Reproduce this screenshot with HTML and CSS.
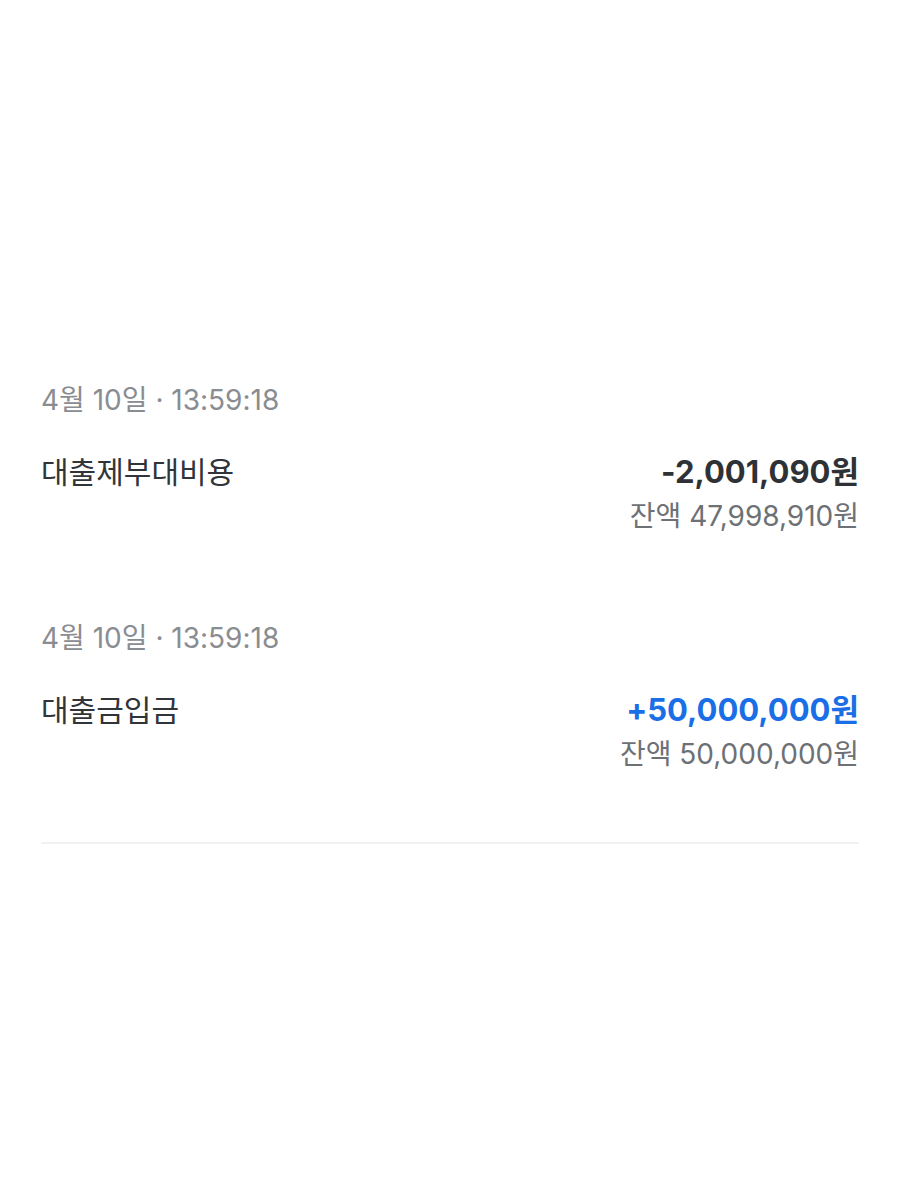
FILE: index.html
```html
<!DOCTYPE html>
<html lang="ko">
<head>
<meta charset="utf-8">
<link rel="stylesheet" href="styles.css">
</head>
<body>
<main class="list">
  <section class="item">
    <div class="date">4월 10일 · 13:59:18</div>
    <div class="row">
      <div class="title">대출제부대비용</div>
      <div class="amounts">
        <div class="amount">-2,001,090원</div>
        <div class="balance">잔액 47,998,910원</div>
      </div>
    </div>
  </section>
  <section class="item">
    <div class="date">4월 10일 · 13:59:18</div>
    <div class="row">
      <div class="title">대출금입금</div>
      <div class="amounts">
        <div class="amount plus">+50,000,000원</div>
        <div class="balance">잔액 50,000,000원</div>
      </div>
    </div>
  </section>
  <hr class="divider">
</main>
</body>
</html>
```
FILE: styles.css
```css
html, body {
  margin: 0;
  padding: 0;
  background: #ffffff;
}
body {
  font-family: Inter, "Noto Sans CJK KR", sans-serif;
  color: #333d4b;
}
.list {
  padding: 382px 41px 0 41px;
}
.item {
  margin-bottom: 80px;
}
.item:last-of-type {
  margin-bottom: 64px;
}
.date {
  font-size: 28px;
  line-height: 36px;
  color: #898c91;
}
.row {
  display: flex;
  justify-content: space-between;
  align-items: flex-start;
  margin-top: 34px;
}
.title {
  font-size: 30px;
  line-height: 40px;
  color: #313539;
}
.amounts {
  text-align: right;
}
.amount {
  font-size: 31px;
  line-height: 40px;
  font-weight: 700;
  color: #2e3236;
}
.amount.plus {
  color: #1a6ee6;
}
.balance {
  font-size: 28px;
  line-height: 48px;
  color: #6d7176;
}
.divider {
  border: 0;
  height: 2px;
  background: #f0f1f3;
  margin: 0;
}
```
